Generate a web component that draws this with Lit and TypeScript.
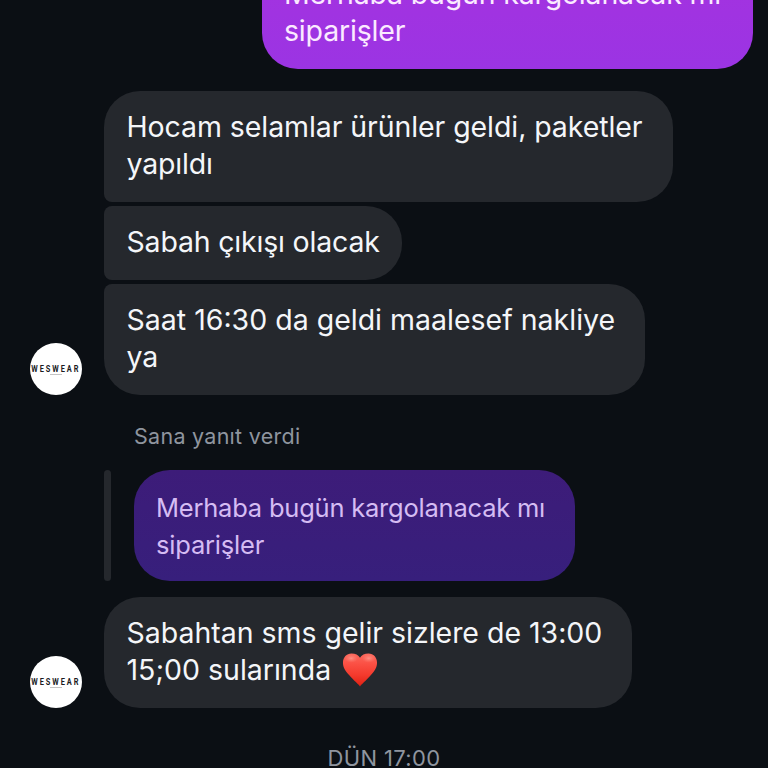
import {LitElement, html, css, svg} from 'lit';
import {customElement, property} from 'lit/decorators.js';
import {styleMap} from 'lit/directives/style-map.js';

interface Line {
  text: string;
  // tracking in px
  spacing: number;
  heart?: boolean;
}

interface Message {
  width: number;
  kind: string;
  lines: Line[];
}

const SENT: Message = {
  width: 491.5,
  kind: 'sent',
  lines: [
    {text: 'Merhaba bugün kargolanacak mı', spacing: -0.17},
    {text: 'siparişler', spacing: -0.17},
  ],
};

const GROUP: Message[] = [
  {
    width: 569,
    kind: 'first',
    lines: [
      {text: 'Hocam selamlar ürünler geldi, paketler', spacing: -0.08},
      {text: 'yapıldı', spacing: -0.2},
    ],
  },
  {
    width: 298,
    kind: 'middle',
    lines: [{text: 'Sabah çıkışı olacak', spacing: -0.19}],
  },
  {
    width: 541,
    kind: 'last',
    lines: [
      {text: 'Saat 16:30 da geldi maalesef nakliye', spacing: 0},
      {text: 'ya', spacing: -0.1},
    ],
  },
];

const QUOTED: Message = {
  width: 441,
  kind: 'quoted',
  lines: [
    {text: 'Merhaba bugün kargolanacak mı', spacing: -0.22},
    {text: 'siparişler', spacing: -0.2},
  ],
};

const REPLY: Message = {
  width: 528,
  kind: 'single',
  lines: [
    {text: 'Sabahtan sms gelir sizlere de 13:00', spacing: -0.02},
    {text: '15;00 sularında', spacing: 0, heart: true},
  ],
};

@customElement('chat-heart')
export class ChatHeart extends LitElement {
  static styles = css`
    :host {
      display: block;
      width: 36px;
      height: 36px;
    }
    svg {
      display: block;
    }
  `;

  render() {
    return html`
      <svg width="36" height="36" viewBox="0 0 37 36">
        ${svg`
          <defs>
            <linearGradient id="fill" x1="0" y1="0" x2="0" y2="1">
              <stop offset="0" stop-color="#fb6a5e"></stop>
              <stop offset=".3" stop-color="#fb5145"></stop>
              <stop offset=".65" stop-color="#f43a2d"></stop>
              <stop offset="1" stop-color="#df2113"></stop>
            </linearGradient>
            <radialGradient id="shine">
              <stop offset="0" stop-color="#ff9c90" stop-opacity=".8"></stop>
              <stop offset="1" stop-color="#ff8074" stop-opacity="0"></stop>
            </radialGradient>
          </defs>
          <path fill="url(#fill)" d="M18.500 35C17 33 12.500 29 7.500 23.500C3.500 19 1 15.500 1 10.500C1 5 4.700 1 9.700 1C13.700 1 17 2.500 18.500 5.500C20 2.500 23.300 1 27.300 1C32.300 1 36 5 36 10.500C36 15.500 33.500 19 29.500 23.500C24.500 29 20 33 18.500 35Z"></path>
          <ellipse fill="url(#shine)" cx="9.500" cy="6" rx="7" ry="4.500"></ellipse>
          <ellipse fill="url(#shine)" cx="27.500" cy="6" rx="7" ry="4.500"></ellipse>
        `}
      </svg>
    `;
  }
}

@customElement('chat-avatar')
export class ChatAvatar extends LitElement {
  static styles = css`
    :host {
      display: flex;
      flex-direction: column;
      align-items: center;
      box-sizing: border-box;
      flex: none;
      width: 52px;
      height: 52px;
      padding-top: 20px;
      border-radius: 50%;
      background-color: #fff;
      overflow: hidden;
    }
    .name {
      color: #1c1c1f;
      font: 700 9px/12px "Roboto", sans-serif;
      letter-spacing: 2.35px;
      margin-right: -.6px;
      white-space: nowrap;
      transform: scaleX(.82);
    }
    .rule {
      width: 12px;
      height: 1px;
      margin-top: -1px;
      background-color: #c4c4c4;
    }
  `;

  render() {
    return html`
      <span class="name">WESWEAR</span>
      <span class="rule"></span>
    `;
  }
}

@customElement('chat-bubble')
export class ChatBubble extends LitElement {
  static styles = css`
    :host {
      display: block;
    }
    .bubble {
      box-sizing: border-box;
      padding: 17px 0 20px 22.5px;
      border-radius: 36px;
      background-color: #25282d;
      color: #f4f6f9;
      font-size: 28.5px;
    }
    .first {
      border-bottom-left-radius: 8px;
    }
    .middle {
      border-top-left-radius: 8px;
      border-bottom-left-radius: 8px;
    }
    .last {
      border-top-left-radius: 8px;
    }
    .sent {
      background: linear-gradient(#a532df, #9b34e3);
      color: #fbeaff;
    }
    .quoted {
      padding: 18.5px 0 18.5px 22.5px;
      background: linear-gradient(#3d1c79, #371f7c);
      color: #d5bcf3;
      font-size: 25.5px;
    }
    .line {
      display: flex;
      align-items: center;
      height: 37px;
      line-height: 37px;
      white-space: nowrap;
    }
    chat-heart {
      margin: 2px 0 0 11px;
    }
  `;

  @property({attribute: false}) message!: Message;

  render() {
    const {width, kind, lines} = this.message;
    return html`
      <div class="bubble ${kind}" style=${styleMap({width: `${width}px`})}>
        ${lines.map((line) => html`
          <div class="line">
            <span style=${styleMap({letterSpacing: `${line.spacing}px`})}>${line.text}</span>
            ${line.heart ? html`<chat-heart></chat-heart>` : ''}
          </div>
        `)}
      </div>
    `;
  }
}

@customElement('app-root')
export class AppRoot extends LitElement {
  static styles = css`
    :host {
      display: flex;
      flex-direction: column;
      box-sizing: border-box;
      width: 768px;
      height: 768px;
      overflow: hidden;
      background-color: #0b0f14;
      font-family: "Inter", sans-serif;
    }
    .outgoing {
      display: flex;
      justify-content: flex-end;
      margin-top: -42px;
      padding-right: 15px;
    }
    .row {
      display: flex;
      align-items: flex-end;
      gap: 22px;
      padding-left: 30px;
    }
    .group {
      margin-top: 22px;
    }
    .stack {
      display: flex;
      flex-direction: column;
      gap: 4px;
    }
    .label {
      margin: 26px 0 0 134px;
      color: #8f959f;
      font-size: 21.5px;
      letter-spacing: .27px;
      line-height: 30px;
    }
    .quote {
      display: flex;
      gap: 22.5px;
      margin: 19.4px 0 0 104px;
    }
    .bar {
      width: 7px;
      border-radius: 3.5px;
      background-color: #25282d;
    }
    .reply {
      margin-top: 15.6px;
    }
    .date {
      margin-top: 35px;
      color: #8f959f;
      font-size: 22px;
      letter-spacing: .35px;
      line-height: 30px;
      text-align: center;
    }
  `;

  render() {
    return html`
      <div class="outgoing">
        <chat-bubble .message=${SENT}></chat-bubble>
      </div>
      <div class="row group">
        <chat-avatar></chat-avatar>
        <div class="stack">
          ${GROUP.map((message) => html`<chat-bubble .message=${message}></chat-bubble>`)}
        </div>
      </div>
      <div class="label">Sana yanıt verdi</div>
      <div class="quote">
        <div class="bar"></div>
        <chat-bubble .message=${QUOTED}></chat-bubble>
      </div>
      <div class="row reply">
        <chat-avatar></chat-avatar>
        <chat-bubble .message=${REPLY}></chat-bubble>
      </div>
      <div class="date">DÜN 17:00</div>
    `;
  }
}
